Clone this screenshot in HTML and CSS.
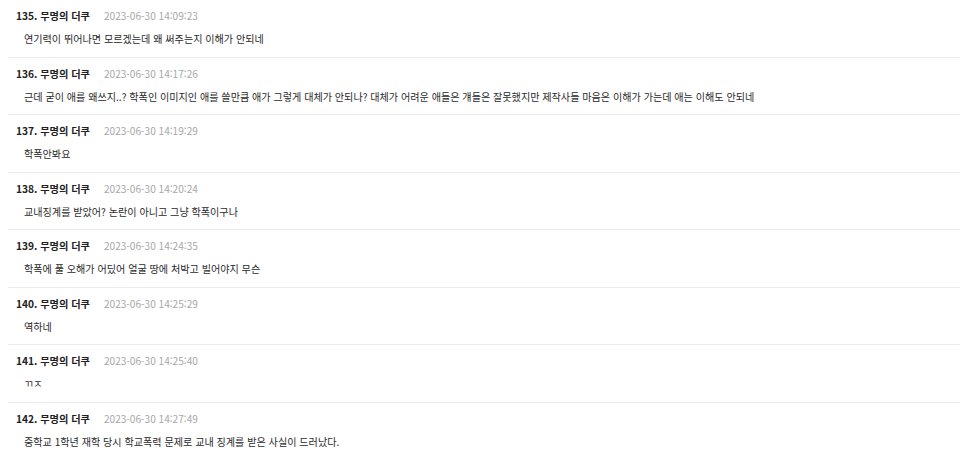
FILE: index.html
```html
<!DOCTYPE html>
<html lang="ko">
<head>
<meta charset="utf-8">
<link rel="stylesheet" href="styles.css">
</head>
<body>
<ul class="comments">
  <li class="item">
    <div class="head"><span class="name">135. 무명의 더쿠</span><span class="date">2023-06-30 14:09:23</span></div>
    <p class="body">연기력이 뛰어나면 모르겠는데 왜 써주는지 이해가 안되네</p>
  </li>
  <li class="item">
    <div class="head"><span class="name">136. 무명의 더쿠</span><span class="date">2023-06-30 14:17:26</span></div>
    <p class="body">근데 굳이 애를 왜쓰지..? 학폭인 이미지인 애를 쓸만큼 애가 그렇게 대체가 안되나? 대체가 어려운 애들은 걔들은 잘못했지만 제작사들 마음은 이해가 가는데 애는 이해도 안되네</p>
  </li>
  <li class="item">
    <div class="head"><span class="name">137. 무명의 더쿠</span><span class="date">2023-06-30 14:19:29</span></div>
    <p class="body">학폭안봐요</p>
  </li>
  <li class="item">
    <div class="head"><span class="name">138. 무명의 더쿠</span><span class="date">2023-06-30 14:20:24</span></div>
    <p class="body">교내징계를 받았어? 논란이 아니고 그냥 학폭이구나</p>
  </li>
  <li class="item">
    <div class="head"><span class="name">139. 무명의 더쿠</span><span class="date">2023-06-30 14:24:35</span></div>
    <p class="body">학폭에 풀 오해가 어딨어 얼굴 땅에 처박고 빌어야지 무슨</p>
  </li>
  <li class="item">
    <div class="head"><span class="name">140. 무명의 더쿠</span><span class="date">2023-06-30 14:25:29</span></div>
    <p class="body">역하네</p>
  </li>
  <li class="item">
    <div class="head"><span class="name">141. 무명의 더쿠</span><span class="date">2023-06-30 14:25:40</span></div>
    <p class="body">ㄲㅈ</p>
  </li>
  <li class="item">
    <div class="head"><span class="name">142. 무명의 더쿠</span><span class="date">2023-06-30 14:27:49</span></div>
    <p class="body">중학교 1학년 재학 당시 학교폭력 문제로 교내 징계를 받은 사실이 드러났다.</p>
  </li>
</ul>
</body>
</html>
```
FILE: styles.css
```css
html, body {
  margin: 0;
  padding: 0;
  background: #fff;
}
body {
  font-family: "Noto Sans CJK KR", "Noto Sans", sans-serif;
  color: #333;
}
.comments {
  list-style: none;
  margin: 0 0 0 8px;
  padding: 0;
}
.item {
  padding: 9px 0 10.5px 8px;
  border-bottom: 1px solid #ececec;
}
.head {
  display: flex;
  align-items: center;
  height: 14px;
  gap: 14px;
}
.name {
  font-size: 10.2px;
  font-weight: 700;
  color: #222;
  line-height: 14px;
}
.date {
  font-size: 10.1px;
  color: #a8a8a8;
  line-height: 14px;
}
.body {
  margin: 9px 0 0 8px;
  font-size: 10.1px;
  line-height: 14px;
  color: #2a2a2a;
}
```
